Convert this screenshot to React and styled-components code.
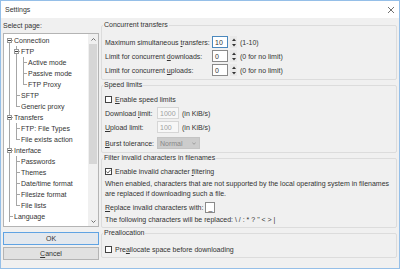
import React from 'react';
import styled, { createGlobalStyle } from 'styled-components';

const GlobalStyle = createGlobalStyle`
  html, body {
    margin: 0;
    padding: 0;
    background: #f0f0f0;
  }
  body {
    font-family: "Liberation Sans", Arial, sans-serif;
    font-size: 7px;
    color: #333;
  }
`;

const LINE = '#a6a6a6';
const vFull = `linear-gradient(${LINE},${LINE}) 3px 0 / 1px 100% no-repeat`;
const vTop = `linear-gradient(${LINE},${LINE}) 3px 0 / 1px 6px no-repeat`;
const vBottom = `linear-gradient(${LINE},${LINE}) 3px 5px / 1px 6px no-repeat`;
const hRight = `linear-gradient(${LINE},${LINE}) 3px 5px / 4px 1px no-repeat`;

const guideBackgrounds = {
    none: 'none',
    pipe: vFull,
    tee: `${hRight}, ${vFull}`,
    elbow: `${hRight}, ${vTop}`,
    down: `${hRight}, ${vBottom}`
};

const Window = styled.div`
    width: 400px;
    height: 269px;
    box-sizing: border-box;
    border: 1px solid #95bfe8;
    background: #f0f0f0;
    display: flex;
    flex-direction: column;
`;
const TitleBar = styled.div`
    height: 17px;
    flex: none;
    background: #fff;
    display: flex;
    align-items: center;
    justify-content: space-between;
    padding: 0 5px 0 4px;
`;
const Body = styled.div`
    flex: 1;
    min-height: 0;
    display: flex;
    gap: 2px;
    padding: 0 2px;
`;
const LeftColumn = styled.div`
    width: 96px;
    flex: none;
    display: flex;
    flex-direction: column;
    padding-top: 3px;
`;
const PageLabel = styled.div`
    height: 10px;
    line-height: 10px;
    margin-bottom: 2px;
`;
const Tree = styled.div`
    height: 194px;
    box-sizing: border-box;
    border: 1px solid #b4b4b4;
    background: #fff;
    display: flex;
`;
const TreeItems = styled.div`
    flex: 1;
    overflow: hidden;
    padding: 1px 0 0 2px;
`;
const TreeRow = styled.div`
    height: 11px;
    display: flex;
    align-items: center;
    white-space: nowrap;
`;
const Guide = styled.div`
    width: 7px;
    height: 11px;
    flex: none;
    display: flex;
    align-items: center;
    padding-left: 1px;
    box-sizing: border-box;
    background: ${p => guideBackgrounds[p.$kind]};
`;
const Expander = styled.div`
    width: 5px;
    height: 5px;
    box-sizing: border-box;
    border: 1px solid #989898;
    background: #fff;
    display: flex;
    align-items: center;
    justify-content: center;
    &::before {
        content: '';
        width: 3px;
        height: 1px;
        background: #444;
    }
`;
const TreeText = styled.span`
    margin-left: 1px;
`;
const ScrollBar = styled.div`
    width: 10px;
    flex: none;
    background: #f0f0f0;
    display: flex;
    flex-direction: column;
`;
const ScrollArrow = styled.div`
    height: 10px;
    flex: none;
    display: flex;
    align-items: center;
    justify-content: center;
`;
const ScrollTrack = styled.div`
    flex: 1;
    display: flex;
    flex-direction: column;
    padding: 0 1px;
`;
const ScrollThumb = styled.div`
    height: 70%;
    background: #d6d6d6;
`;
const Button = styled.div`
    height: 13px;
    box-sizing: border-box;
    margin-top: ${p => p.$mt}px;
    border: 1px solid ${p => (p.$default ? '#5fa3e3' : '#b4b4b4')};
    background: ${p => (p.$default ? '#e3e8ee' : '#e1e1e1')};
    display: flex;
    align-items: center;
    justify-content: center;
`;
const RightColumn = styled.div`
    width: 296px;
    flex: none;
    display: flex;
    flex-direction: column;
    padding-top: 2px;
`;
const Group = styled.fieldset`
    margin: 0;
    min-width: 0;
    height: ${p => p.$h}px;
    box-sizing: border-box;
    padding: ${p => p.$pt}px 0 0 3px;
    border: 1px solid #dcdcdc;
    border-radius: 2px;
    display: flex;
    flex-direction: column;
`;
const Legend = styled.legend`
    padding: 0 1px;
    margin-left: -2px;
    line-height: 10px;
    font-size: 7px;
`;
const Row = styled.div`
    height: ${p => p.$h || 12}px;
    margin-top: ${p => p.$mt || 0}px;
    display: flex;
    align-items: center;
    white-space: nowrap;
    flex: none;
`;
const Label = styled.span`
    width: ${p => p.$w}px;
    flex: none;
`;
const Field = styled.div`
    width: ${p => p.$w}px;
    height: ${p => p.$h || 12}px;
    margin-left: ${p => p.$ml || 0}px;
    box-sizing: border-box;
    flex: none;
    padding-left: 2px;
    display: flex;
    align-items: center;
    border: 1px solid ${p => (p.$disabled ? '#d6d6d6' : p.$focus ? '#4a88bd' : '#8a8a8a')};
    background: ${p => (p.$disabled ? '#f7f7f7' : '#fff')};
    color: ${p => (p.$disabled ? '#a0a0a0' : '#333')};
`;
const Spin = styled.div`
    width: 7px;
    height: 12px;
    margin-left: 2px;
    flex: none;
    display: flex;
    flex-direction: column;
    background: #e9e9e9;
`;
const SpinHalf = styled.div`
    flex: 1;
    display: flex;
    align-items: center;
    justify-content: center;
`;
const Hint = styled.span`
    margin-left: 3px;
`;
const Select = styled.div`
    width: 43px;
    height: 12px;
    box-sizing: border-box;
    border: 1px solid #c4c4c4;
    background: #cccccc;
    color: #878787;
    padding: 0 3px 0 2px;
    display: flex;
    align-items: center;
    justify-content: space-between;
`;
const Check = styled.div`
    width: 7px;
    height: 7px;
    box-sizing: border-box;
    border: 1px solid #444;
    background: #fff;
    margin-right: 3px;
    flex: none;
    display: flex;
    align-items: center;
    justify-content: center;
`;
const Paragraph = styled.div`
    line-height: 10px;
    margin-top: 2px;
    white-space: nowrap;
    flex: none;
`;

const treeRows = [
    { label: 'Connection', guides: ['down'], box: true },
    { label: 'FTP', guides: ['pipe', 'tee'], box: true },
    { label: 'Active mode', guides: ['pipe', 'pipe', 'tee'] },
    { label: 'Passive mode', guides: ['pipe', 'pipe', 'tee'] },
    { label: 'FTP Proxy', guides: ['pipe', 'pipe', 'elbow'] },
    { label: 'SFTP', guides: ['pipe', 'tee'] },
    { label: 'Generic proxy', guides: ['pipe', 'elbow'] },
    { label: 'Transfers', guides: ['tee'], box: true },
    { label: 'FTP: File Types', guides: ['pipe', 'tee'] },
    { label: 'File exists action', guides: ['pipe', 'elbow'] },
    { label: 'Interface', guides: ['tee'], box: true },
    { label: 'Passwords', guides: ['pipe', 'tee'] },
    { label: 'Themes', guides: ['pipe', 'tee'] },
    { label: 'Date/time format', guides: ['pipe', 'tee'] },
    { label: 'Filesize format', guides: ['pipe', 'tee'] },
    { label: 'File lists', guides: ['pipe', 'elbow'] },
    { label: 'Language', guides: ['tee'] }
];

const Chevron = ({ up }) => (
    <svg width="5" height="3" viewBox="0 0 5 3">
        <path d={up ? 'M0.5 2.5 L2.5 0.5 L4.5 2.5' : 'M0.5 0.5 L2.5 2.5 L4.5 0.5'} fill="none" stroke="#606060" strokeWidth="0.9" />
    </svg>
);

const Triangle = ({ up }) => (
    <svg width="4" height="3" viewBox="0 0 4 3">
        <path d={up ? 'M0 3 L2 0.5 L4 3 Z' : 'M0 0 L2 2.5 L4 0 Z'} fill="#333" />
    </svg>
);

const Spinner = () => (
    <Spin>
        <SpinHalf><Triangle up /></SpinHalf>
        <SpinHalf><Triangle /></SpinHalf>
    </Spin>
);

const CheckBox = ({ checked }) => (
    <Check>
        {checked && (
            <svg width="5" height="5" viewBox="0 0 5 5">
                <path d="M0.4 2.6 L1.9 4 L4.6 0.9" fill="none" stroke="#333" strokeWidth="0.8" />
            </svg>
        )}
    </Check>
);

const SettingsTree = () => (
    <Tree>
        <TreeItems>
            {treeRows.map(row => (
                <TreeRow key={row.label}>
                    {row.guides.map((kind, i) => (
                        <Guide key={i} $kind={kind}>
                            {row.box && i === row.guides.length - 1 && <Expander />}
                        </Guide>
                    ))}
                    <TreeText>{row.label}</TreeText>
                </TreeRow>
            ))}
        </TreeItems>
        <ScrollBar>
            <ScrollArrow><Chevron up /></ScrollArrow>
            <ScrollTrack><ScrollThumb /></ScrollTrack>
            <ScrollArrow><Chevron /></ScrollArrow>
        </ScrollBar>
    </Tree>
);

const App = () => {
    return <>
        <GlobalStyle />
        <Window>
            <TitleBar>
                <span>Settings</span>
                <svg width="6" height="6" viewBox="0 0 6 6">
                    <path d="M0 0 L6 6 M6 0 L0 6" stroke="#333" strokeWidth="0.7" />
                </svg>
            </TitleBar>
            <Body>
                <LeftColumn>
                    <PageLabel>Select page:</PageLabel>
                    <SettingsTree />
                    <Button $default $mt={5}>OK</Button>
                    <Button $mt={2}><span><u>C</u>ancel</span></Button>
                </LeftColumn>
                <RightColumn>
                    <Group $h={60} $pt={6}>
                        <Legend>Concurrent transfers</Legend>
                        <Row>
                            <Label $w={107}>Maximum simultaneous <u>t</u>ransfers:</Label>
                            <Field $w={16} $focus>10</Field>
                            <Spinner />
                            <Hint>(1-10)</Hint>
                        </Row>
                        <Row $mt={2}>
                            <Label $w={107}>Limit for concurrent <u>d</u>ownloads:</Label>
                            <Field $w={16}>0</Field>
                            <Spinner />
                            <Hint>(0 for no limit)</Hint>
                        </Row>
                        <Row $mt={2}>
                            <Label $w={107}>Limit for concurrent <u>u</u>ploads:</Label>
                            <Field $w={16}>0</Field>
                            <Spinner />
                            <Hint>(0 for no limit)</Hint>
                        </Row>
                    </Group>
                    <Group $h={73} $pt={3}>
                        <Legend>Speed limits</Legend>
                        <Row>
                            <CheckBox />
                            <span><u>E</u>nable speed limits</span>
                        </Row>
                        <Row $mt={2}>
                            <Label $w={52}>Download <u>l</u>imit:</Label>
                            <Field $w={22} $disabled>1000</Field>
                            <Hint>(in KiB/s)</Hint>
                        </Row>
                        <Row $mt={2}>
                            <Label $w={52}><u>U</u>pload limit:</Label>
                            <Field $w={22} $disabled>100</Field>
                            <Hint>(in KiB/s)</Hint>
                        </Row>
                        <Row $mt={4}>
                            <Label $w={52}><u>B</u>urst tolerance:</Label>
                            <Select>
                                <span>Normal</span>
                                <svg width="4" height="3" viewBox="0 0 4 3">
                                    <path d="M0.3 0.5 L2 2.3 L3.7 0.5" fill="none" stroke="#8a8a8a" strokeWidth="0.7" />
                                </svg>
                            </Select>
                        </Row>
                    </Group>
                    <Group $h={75} $pt={2}>
                        <Legend>Filter invalid characters in filenames</Legend>
                        <Row>
                            <CheckBox checked />
                            <span>Enable invalid character <u>f</u>iltering</span>
                        </Row>
                        <Paragraph>
                            When enabled, characters that are not supported by the local operating system in filenames<br />
                            are replaced if downloading such a file.
                        </Paragraph>
                        <Row $mt={2}>
                            <span><u>R</u>eplace invalid characters with:</span>
                            <Field $w={10} $h={11} $ml={2}>_</Field>
                        </Row>
                        <Row $h={10} $mt={1}>
                            {'The following characters will be replaced: \\ / : * ? " < > |'}
                        </Row>
                    </Group>
                    <Group $h={30} $pt={5}>
                        <Legend>Preallocation</Legend>
                        <Row>
                            <CheckBox />
                            <span>Pre<u>a</u>llocate space before downloading</span>
                        </Row>
                    </Group>
                </RightColumn>
            </Body>
        </Window>
    </>;
};

export default App;
